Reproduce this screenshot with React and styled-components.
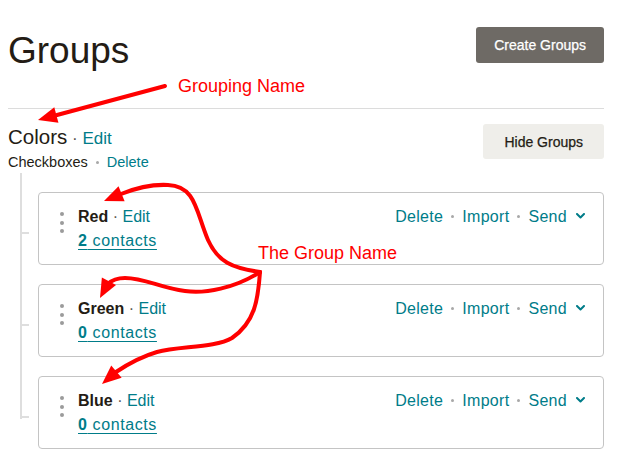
import React from "react";
import styled, { createGlobalStyle } from "styled-components";

const TEAL = "#007c89";
const INK = "#241c15";

const GlobalStyle = createGlobalStyle`
  html, body { margin: 0; padding: 0; background: #fff; }
  body { font-family: "Liberation Sans", Arial, sans-serif; color: ${INK}; }
  * { box-sizing: border-box; }
`;

const Page = styled.div`
  position: relative;
  width: 617px;
  height: 465px;
  overflow: hidden;
  padding: 0 13px 0 8px;
`;

const Header = styled.header`
  display: flex;
  justify-content: space-between;
  align-items: flex-start;
  padding: 27px 0 35px;
  border-bottom: 1px solid #dcdcdc;
`;

const Title = styled.h1`
  margin: 2px 0 0;
  font-size: 37px;
  line-height: 44px;
  font-weight: 400;
  color: ${INK};
`;

const Button = styled.button`
  height: ${(p) => (p.$dark ? 36 : 35)}px;
  padding: 0 ${(p) => (p.$dark ? 18 : 21)}px;
  margin-top: ${(p) => p.$top || 0}px;
  border: 0;
  border-radius: 3px;
  font-family: "Liberation Sans", Arial, sans-serif;
  font-size: 14px;
  line-height: 1;
  -webkit-text-stroke: 0.25px currentColor;
  background: ${(p) => (p.$dark ? "#6e6a65" : "#efeeea")};
  color: ${(p) => (p.$dark ? "#fff" : INK)};
`;

const GroupSection = styled.section`
  display: flex;
  justify-content: space-between;
  align-items: flex-start;
`;

const GroupInfo = styled.div`
  padding-top: 16px;
`;

const GroupTitle = styled.div`
  height: 24px;
  font-size: 20.5px;
  line-height: 24px;
  color: ${INK};
  white-space: nowrap;
`;

const TitleLinks = styled.span`
  font-size: 17px;
  line-height: 1;
`;

const SubLine = styled.div`
  margin-top: 3px;
  font-size: 14.5px;
  line-height: 20px;
  display: flex;
  align-items: center;
`;

const Link = styled.a`
  color: ${TEAL};
  text-decoration: none;
`;

const MidDot = styled.span`
  color: #5a5550;
`;

const Dot = styled.span`
  display: inline-block;
  width: 3px;
  height: 3px;
  border-radius: 50%;
  background: #a8a8a8;
  margin: 0 8px;
  vertical-align: 4px;
`;

const Tree = styled.div`
  position: relative;
  margin: 1px 0 0 12px;
  padding-top: 19px;
  display: flex;
  flex-direction: column;
  gap: 19px;
  &::before {
    content: "";
    position: absolute;
    left: 0;
    top: 0;
    bottom: 30px;
    width: 2px;
    background: #dedede;
  }
`;

const Row = styled.div`
  position: relative;
  padding-left: 18px;
  &::before {
    content: "";
    position: absolute;
    left: 0;
    top: 40px;
    width: 9px;
    height: 2px;
    background: #dedede;
  }
`;

const Card = styled.div`
  display: flex;
  align-items: flex-start;
  height: 73px;
  border: 1px solid #c4c4c4;
  border-radius: 4px;
  padding: 13px 18px 0 21px;
`;

const Handle = styled.div`
  display: flex;
  flex-direction: column;
  gap: 4.5px;
  margin: 6px 14px 0 0;
  span {
    width: 4px;
    height: 4px;
    border-radius: 50%;
    background: #9b9b9b;
  }
`;

const Info = styled.div`
  display: flex;
  flex-direction: column;
`;

const Name = styled.div`
  font-size: 16px;
  line-height: 22px;
  strong { font-weight: 700; color: ${INK}; }
`;

const Contacts = styled.a`
  margin-top: 2px;
  font-size: 16px;
  line-height: 22px;
  letter-spacing: 0.6px;
  color: ${TEAL};
  text-decoration: underline;
  text-decoration-thickness: 1px;
  text-underline-offset: 3px;
  strong { font-weight: 700; }
`;

const Actions = styled.div`
  margin-left: auto;
  font-size: 16px;
  line-height: 22px;
  letter-spacing: 0.3px;
  color: ${TEAL};
  white-space: nowrap;
  svg { margin-left: 9px; vertical-align: 3px; }
`;

const Overlay = styled.svg`
  position: absolute;
  left: 0;
  top: 0;
  pointer-events: none;
`;

const Annotation = styled.span`
  position: absolute;
  left: ${(p) => p.$x}px;
  top: ${(p) => p.$y}px;
  font-family: "Liberation Sans", Arial, sans-serif;
  font-size: 18px;
  line-height: 20px;
  color: #f00;
  white-space: nowrap;
`;

function Arrow({ d, tip, from }) {
  const dx = tip[0] - from[0];
  const dy = tip[1] - from[1];
  const len = Math.hypot(dx, dy);
  const ux = dx / len;
  const uy = dy / len;
  const bx = tip[0] - 19 * ux;
  const by = tip[1] - 19 * uy;
  const px = -uy;
  const py = ux;
  const pts = `${tip[0]},${tip[1]} ${bx + 8 * px},${by + 8 * py} ${bx - 8 * px},${by - 8 * py}`;
  return (
    <g>
      <path d={d} fill="none" stroke="#f00" strokeWidth="4" strokeLinecap="round" strokeLinejoin="round" />
      <polygon points={pts} fill="#f00" />
    </g>
  );
}

const groups = [
  { name: "Red", count: 2 },
  { name: "Green", count: 0 },
  { name: "Blue", count: 0 },
];

function Chevron() {
  return (
    <svg width="9" height="6" viewBox="0 0 9 6">
      <polyline points="1,1 4.5,4.5 8,1" fill="none" stroke={TEAL} strokeWidth="2" strokeLinecap="round" strokeLinejoin="round" />
    </svg>
  );
}

export default function App() {
  return (
    <>
      <GlobalStyle />
      <Page>
        <Header>
          <Title>Groups</Title>
          <Button $dark>Create Groups</Button>
        </Header>
        <GroupSection>
          <GroupInfo>
            <GroupTitle>
              Colors
              <TitleLinks>
                {" "}
                <MidDot>·</MidDot> <Link>Edit</Link>
              </TitleLinks>
            </GroupTitle>
            <SubLine>
              Checkboxes
              <Dot />
              <Link>Delete</Link>
            </SubLine>
          </GroupInfo>
          <Button $top={15}>Hide Groups</Button>
        </GroupSection>
        <Tree>
          {groups.map((g) => (
            <Row key={g.name}>
              <Card>
                <Handle>
                  <span />
                  <span />
                  <span />
                </Handle>
                <Info>
                  <Name>
                    <strong>{g.name}</strong> <MidDot>·</MidDot> <Link>Edit</Link>
                  </Name>
                  <Contacts>
                    <strong>{g.count}</strong> contacts
                  </Contacts>
                </Info>
                <Actions>
                  Delete
                  <Dot />
                  Import
                  <Dot />
                  Send
                  <Chevron />
                </Actions>
              </Card>
            </Row>
          ))}
        </Tree>

        <Overlay width="617" height="465" viewBox="0 0 617 465">
          <Arrow d="M165,86 L57,115" tip={[38, 120]} from={[165, 86]} />
          <Arrow
            d="M260,272 C232,268 218,262 208,240 C196,212 196,186 168,185 C150,184 136,188 121,194"
            tip={[104, 201]}
            from={[121, 194]}
          />
          <Arrow
            d="M260,272 C235,288 205,294 185,291 C160,288 145,278 125,278 C116,278 111,281 108,284"
            tip={[100, 298]}
            from={[108, 283]}
          />
          <Arrow
            d="M260,272 C258,300 255,322 232,338 C215,348 180,346 157,352 C140,357 128,364 116,372"
            tip={[102, 384]}
            from={[116, 372]}
          />
        </Overlay>
        <Annotation $x={178} $y={76}>Grouping Name</Annotation>
        <Annotation $x={258} $y={243}>The Group Name</Annotation>
      </Page>
    </>
  );
}
